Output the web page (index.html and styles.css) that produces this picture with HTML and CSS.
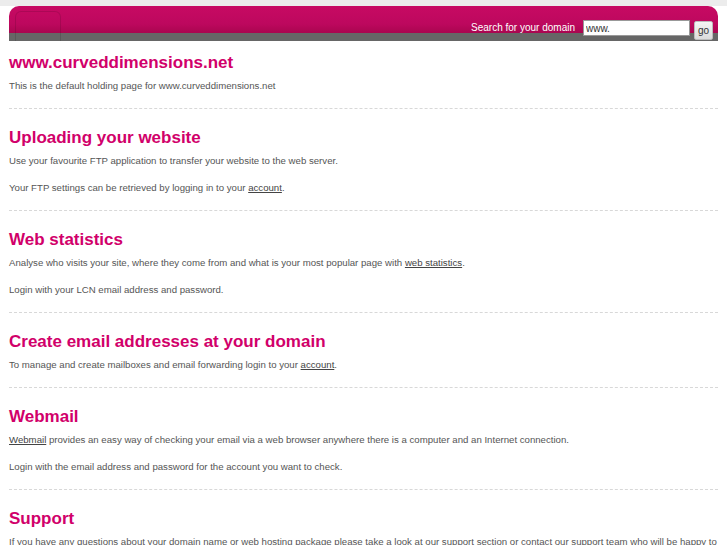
FILE: index.html
```html
<!DOCTYPE html>
<html lang="en">

<head>
     <meta charset="UTF-8">
     <title>www.curveddimensions.net</title>
     <link rel="stylesheet" href="styles.css">
</head>

<body>
     <div id="wrapper">
          <!-- top bar -->
          <div class="header">
               <div class="header-tab"></div>
               <form class="search">
                    <label for="domain">Search for your domain</label>
                    <input type="text" id="domain" value="www.">
                    <button type="button">go</button>
               </form>
          </div>

          <div class="section">
               <h2>www.curveddimensions.net</h2>
               <p>This is the default holding page for www.curveddimensions.net</p>
          </div>

          <div class="section">
               <h2>Uploading your website</h2>
               <p>Use your favourite FTP application to transfer your website to the web server.</p>
               <p>Your FTP settings can be retrieved by logging in to your <a href="#">account</a>.</p>
          </div>

          <div class="section">
               <h2>Web statistics</h2>
               <p>Analyse who visits your site, where they come from and what is your most popular page with <a href="#">web statistics</a>.</p>
               <p>Login with your LCN email address and password.</p>
          </div>

          <div class="section">
               <h2>Create email addresses at your domain</h2>
               <p>To manage and create mailboxes and email forwarding login to your <a href="#">account</a>.</p>
          </div>

          <div class="section">
               <h2>Webmail</h2>
               <p><a href="#">Webmail</a> provides an easy way of checking your email via a web browser anywhere there is a computer and an Internet connection.</p>
               <p>Login with the email address and password for the account you want to check.</p>
          </div>

          <div class="section">
               <h2>Support</h2>
               <p>If you have any questions about your domain name or web hosting package please take a look at our support section or contact our support team who will be happy to help.</p>
          </div>
     </div>
</body>

</html>
```

FILE: styles.css
```css
* {
     padding: 0;
     margin: 0;
     box-sizing: border-box;
}

body {
     font-family: 'Liberation Sans', Arial, sans-serif;
     font-size: 9.65px;
     color: #555;
     background: #fff;
     border-top: 6px solid #ececec;
}

#wrapper {
     margin: 0 9px;
}

/* header bar */
.header {
     height: 35px;
     display: flex;
     justify-content: space-between;
     align-items: flex-end;
     border-radius: 10px 10px 0 0;
     background: linear-gradient(to bottom, #c70a63 0, #bd085e 18px, #a9064f 27px, #666 27px, #666 35px);
}

.header-tab {
     width: 46px;
     height: 30px;
     margin-left: 6px;
     border: 1px solid rgba(0, 0, 0, 0.12);
     border-bottom: none;
     border-radius: 6px 6px 0 0;
}

.search {
     display: flex;
     align-items: flex-end;
     margin: 0 5px 1px 0;
}

.search label {
     color: #fff;
     font-size: 10px;
     margin: 0 8px 7px 0;
}

.search input {
     width: 107px;
     height: 16px;
     margin-bottom: 4px;
     padding: 0 2px;
     border: 1px solid #999;
     background: #fff;
     font-family: 'Liberation Sans', Arial, sans-serif;
     font-size: 10px;
     color: #333;
     outline: none;
}

.search button {
     width: 19px;
     height: 19px;
     margin-left: 4px;
     border: 1px solid #bbb;
     border-radius: 2px;
     background: linear-gradient(#f4f4f4, #dcdcdc);
     font-family: 'Liberation Sans', Arial, sans-serif;
     font-size: 10px;
     color: #333;
     cursor: pointer;
}

/* content blocks */
.section {
     padding: 11px 0 2px;
     border-bottom: 1px dashed #d8d8d8;
}

.section + .section {
     padding-top: 18px;
}

.section h2 {
     font-size: 17px;
     line-height: 22px;
     color: #d1006a;
     margin-bottom: 5px;
}

.section p {
     line-height: 13px;
     margin-bottom: 14px;
}

.section a {
     color: #444;
}
```
